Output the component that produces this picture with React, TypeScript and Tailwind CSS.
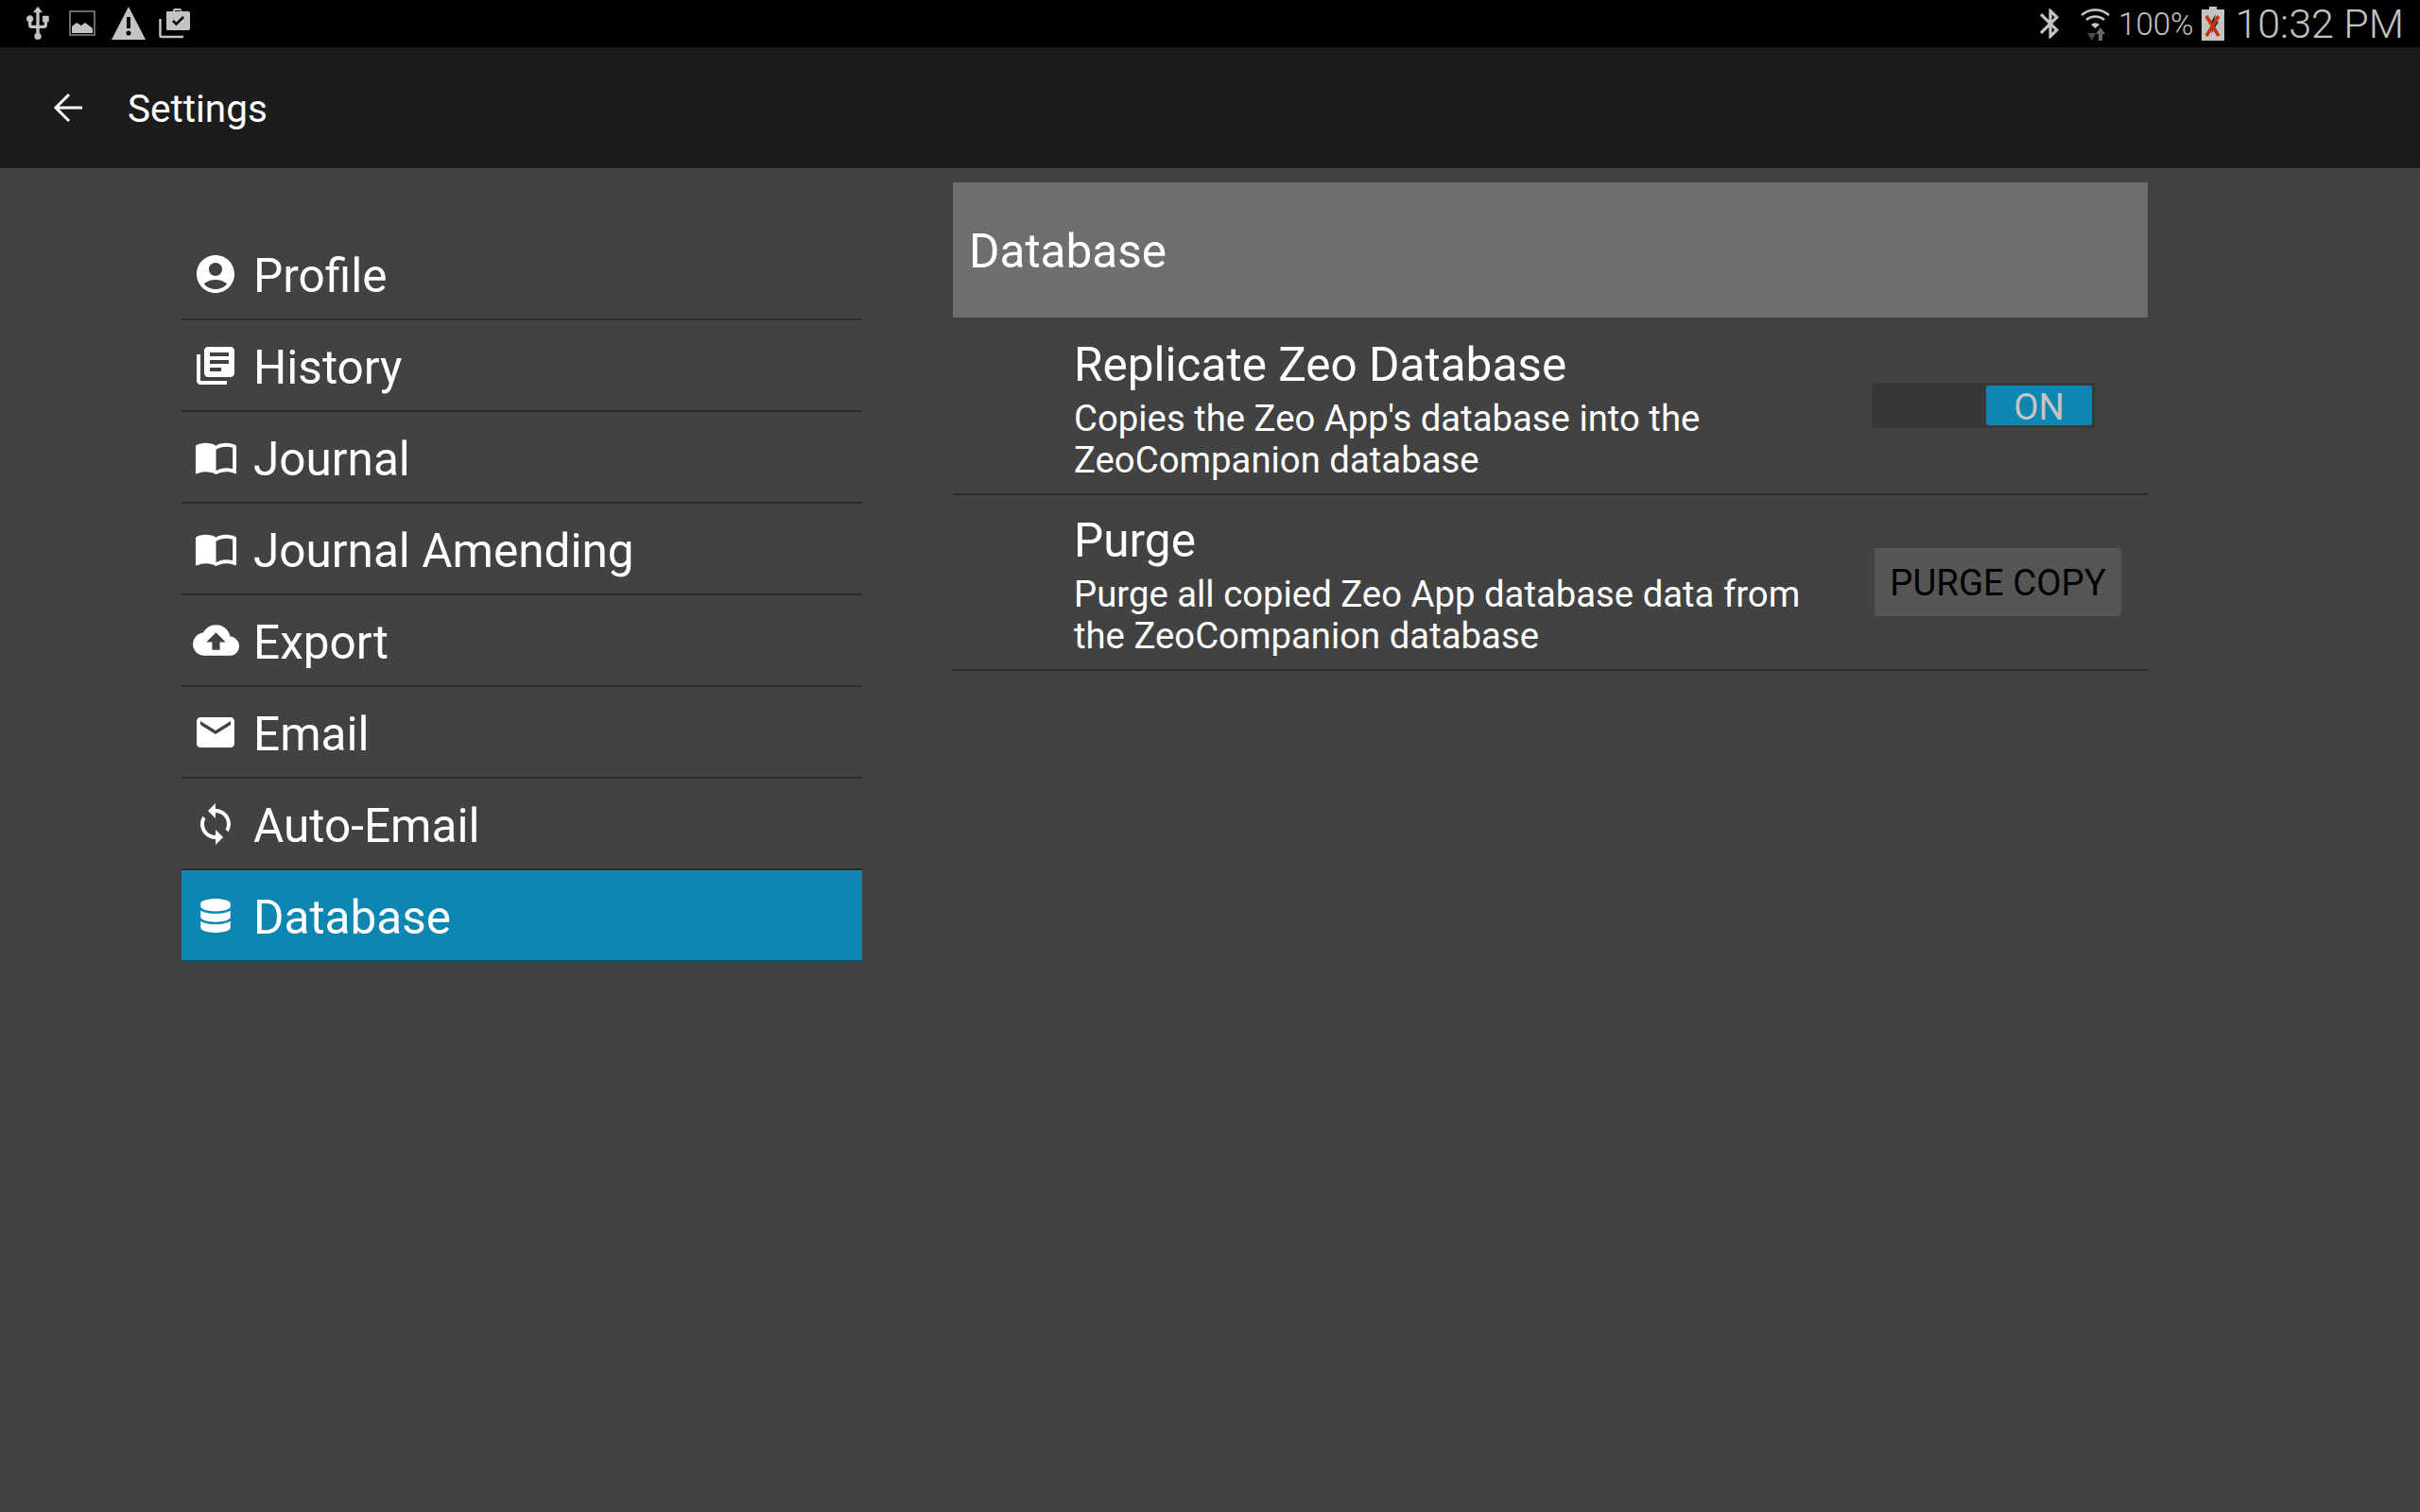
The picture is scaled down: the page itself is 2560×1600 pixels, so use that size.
import { MdAccountCircle, MdLibraryBooks, MdImportContacts, MdCloudUpload, MdEmail, MdSync, MdUsb, MdBluetooth } from "react-icons/md";
import { FaDatabase } from "react-icons/fa";

const items = [
  { label: "Profile", Icon: MdAccountCircle, size: 48 },
  { label: "History", Icon: MdLibraryBooks, size: 48 },
  { label: "Journal", Icon: MdImportContacts, size: 47 },
  { label: "Journal Amending", Icon: MdImportContacts, size: 47 },
  { label: "Export", Icon: MdCloudUpload, size: 49 },
  { label: "Email", Icon: MdEmail, size: 48 },
  { label: "Auto-Email", Icon: MdSync, size: 48 },
];

function StatusLeft() {
  return (
    <div className="flex items-center text-[#c4c4c4]">
      <MdUsb size={40} className="ml-[20px]" />
      <svg width="28" height="28" viewBox="0 0 28 28" className="ml-[13px]">
        <rect x="1" y="1" width="26" height="25" fill="none" stroke="#8a8a8a" strokeWidth="1.5" />
        <path d="M3 24v-7l5-4 5 3 4-3 8 6v5z" fill="#c4c4c4" />
      </svg>
      <svg width="38" height="36" viewBox="0 0 38 36" className="ml-[16px]">
        <path d="M19 0L37 35H1z" fill="#c4c4c4" />
        <rect x="17" y="11" width="4" height="12" fill="#000" />
        <circle cx="19" cy="28" r="2.5" fill="#000" />
      </svg>
      <svg width="34" height="32" viewBox="0 0 34 32" className="ml-[13px]">
        <path d="M8 4a1 1 0 0 1 1-1h6V2a2 2 0 0 1 2-2h5a2 2 0 0 1 2 2v1h7a2 2 0 0 1 2 2v16a2 2 0 0 1-2 2H9a1 1 0 0 1-1-1z" fill="#c4c4c4" />
        <path d="M17 3V2h6v1z" fill="#000" />
        <path d="M15 13l3.500 3.500L26 9" fill="none" stroke="#000" strokeWidth="2.500" />
        <path d="M1.500 11v18a1 1 0 0 0 1 1H26" fill="none" stroke="#c4c4c4" strokeWidth="2.500" />
      </svg>
    </div>
  );
}

function StatusRight() {
  return (
    <div className="flex items-center text-[#c4c4c4]">
      <MdBluetooth size={38} />
      <svg width="32" height="36" viewBox="0 0 32 36" className="ml-[13px] mt-[4px]">
        <path d="M1 7a22 22 0 0 1 29 0" fill="none" stroke="#c4c4c4" strokeWidth="2.500" />
        <path d="M6 12a15 15 0 0 1 19 0" fill="none" stroke="#c4c4c4" strokeWidth="2.500" />
        <path d="M11 17a7 7 0 0 1 9 0l-4.500 4z" fill="#c4c4c4" />
        <path d="M11 26h-4l5 8 0 0 4-8h-3z" fill="#4a4a4a" />
        <path d="M21 20l-5 7h3v7h4v-7h3z" fill="#6a6a6a" />
      </svg>
      <span className="ml-[8px] mt-[1px] text-[33px] leading-[50px] font-light">100%</span>
      <svg width="24" height="36" viewBox="0 0 24 36" className="ml-[9px]">
        <path d="M8 0h8v3h8v33H0V3h8z" fill="#c4c4c4" />
        <path d="M15 8L8 19h5l-3 10 8-13h-5z" fill="#222" />
        <path d="M5 10l13 21M18 10L5 31" stroke="#c8300c" strokeWidth="3.500" />
      </svg>
      <span className="ml-[11px] mr-[17px] text-[43px] leading-[50px] font-light">10:32 PM</span>
    </div>
  );
}

export default function App() {
  return (
    <div className="flex h-[1600px] w-[2560px] flex-col overflow-hidden bg-[#424242] font-['Roboto',sans-serif] text-white">
      <div className="flex h-[50px] items-center justify-between bg-black">
        <StatusLeft />
        <StatusRight />
      </div>
      <div className="flex h-[128px] items-center bg-[#1c1c1c]">
        <svg width="32" height="32" viewBox="0 0 32 32" className="ml-[56px]">
          <path d="M31 16H3M17 2L3 16l14 14" fill="none" stroke="#fff" strokeWidth="3" />
        </svg>
        <span className="ml-[47px] mt-[2px] text-[40.5px]">Settings</span>
      </div>
      <div className="flex flex-1 items-start pl-[192px]">
        <div className="mt-[64px] w-[720px]">
          {items.map(({ label, Icon, size }) => (
            <div key={label} className="flex h-[97px] items-center border-b-2 border-[#2c2c2c]">
              <div className="flex w-[72px] justify-center">
                <Icon size={size} />
              </div>
              <span className="ml-[4px] mt-[5px] text-[49.500px]">{label}</span>
            </div>
          ))}
          <div className="flex h-[97px] items-center border-b-2 border-[#0b5573] bg-[#0d86b1]">
            <div className="flex w-[72px] justify-center">
              <FaDatabase size={36} />
            </div>
            <span className="ml-[4px] mt-[5px] text-[49.500px]">Database</span>
          </div>
        </div>
        <div className="ml-[96px] mt-[15px] w-[1264px]">
          <div className="flex h-[143px] items-center bg-[#6f6f6f] pl-[17px] pt-[4px] text-[49.500px]">Database</div>
          <div className="flex h-[188px] items-center border-b-2 border-[#2c2c2c] pl-[128px]">
            <div className="w-[844px] pt-[8px]">
              <div className="text-[49.500px] leading-[56px]">Replicate Zeo Database</div>
              <div className="mt-[7px] w-[760px] text-[38.300px] leading-[44px]">Copies the Zeo App's database into the ZeoCompanion database</div>
            </div>
            <div className="flex h-[48px] w-[236px] justify-end bg-[#373737] p-[3px]">
              <div className="flex w-[112px] items-center justify-center rounded-[2px] bg-[#0d86b1] pt-[4px] text-[38.300px] text-[#c4c4c4]">ON</div>
            </div>
          </div>
          <div className="flex h-[186px] items-center border-b-2 border-[#2c2c2c] pl-[128px]">
            <div className="w-[847px] pt-[7px]">
              <div className="text-[49.500px] leading-[56px]">Purge</div>
              <div className="mt-[7px] w-[800px] text-[38.300px] leading-[44px]">Purge all copied Zeo App database data from the ZeoCompanion database</div>
            </div>
            <div className="flex h-[72px] w-[261px] items-center justify-center rounded-[4px] bg-[#565656] pt-[2px] text-[38.300px] text-black">PURGE COPY</div>
          </div>
        </div>
      </div>
    </div>
  );
}
